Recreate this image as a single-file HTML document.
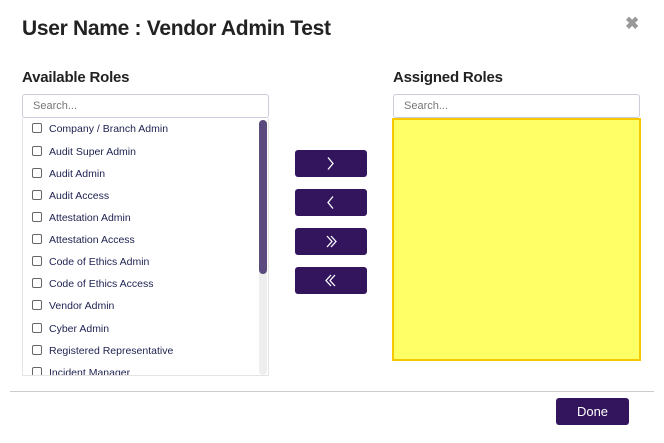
<!DOCTYPE html><html><head><style>
body{margin:0;width:664px;height:443px;background:#fff;font-family:"Liberation Sans",sans-serif;position:relative;overflow:hidden}
.a{position:absolute}
.t{left:22px;top:17px;font-size:21px;color:#222;font-weight:bold;letter-spacing:-0.3px}
.h{font-size:15px;color:#222;top:69px;font-weight:bold;letter-spacing:-0.2px}
.s{border:1px solid #ccd;border-radius:3px;font-size:11px;color:#777;line-height:22px;padding-left:10px;box-sizing:border-box;height:24px;width:247px}
.list{left:22px;top:118px;width:247px;height:258px;border:1px solid #e4e4e4;border-top:0;box-sizing:border-box;overflow:hidden}
.it{position:absolute;left:9px;font-size:10.5px;color:#1d2150;white-space:nowrap}
.it i{display:inline-block;width:8px;height:8px;border:1px solid #666;border-radius:2px;vertical-align:-1px;margin-right:7px}
.sb{left:259px;top:120px;width:8px;height:255px;background:#eee;border-radius:4px}
.th{left:259px;top:120px;width:8px;height:154px;background:#5b4a7e;border-radius:4px}
.b{left:295px;width:72px;height:27px;background:#33155e;border-radius:3px}
.b svg{position:absolute;left:0;top:0}
</style></head><body>
<div class="a t">User Name : Vendor Admin Test</div>
<div class="a" style="left:625px;top:14px;font-size:17px;color:#999;font-weight:bold">✖</div>
<div class="a h" style="left:22px">Available Roles</div>
<div class="a h" style="left:393px">Assigned Roles</div>
<div class="a s" style="left:22px;top:94px">Search...</div>
<div class="a s" style="left:393px;top:94px">Search...</div>
<div class="a list">
<div class="it" style="top:5px"><i></i>Company / Branch Admin</div>
<div class="it" style="top:28px"><i></i>Audit Super Admin</div>
<div class="it" style="top:50px"><i></i>Audit Admin</div>
<div class="it" style="top:72px"><i></i>Audit Access</div>
<div class="it" style="top:94px"><i></i>Attestation Admin</div>
<div class="it" style="top:116px"><i></i>Attestation Access</div>
<div class="it" style="top:138px"><i></i>Code of Ethics Admin</div>
<div class="it" style="top:160px"><i></i>Code of Ethics Access</div>
<div class="it" style="top:182px"><i></i>Vendor Admin</div>
<div class="it" style="top:205px"><i></i>Cyber Admin</div>
<div class="it" style="top:227px"><i></i>Registered Representative</div>
<div class="it" style="top:249px"><i></i>Incident Manager</div>
</div>
<div class="a sb"></div><div class="a th"></div>
<div class="a b" style="top:150px"><svg width="72" height="27"><path d="M33,7.5 l5,6 l-5,6" fill="none" stroke="#fff" stroke-width="1.3"/></svg></div>
<div class="a b" style="top:189px"><svg width="72" height="27"><path d="M38,7.5 l-5,6 l5,6" fill="none" stroke="#fff" stroke-width="1.3"/></svg></div>
<div class="a b" style="top:228px"><svg width="72" height="27"><path d="M32,8 l5,5.5 l-5,5.5 M36,8 l5,5.5 l-5,5.5" fill="none" stroke="#fff" stroke-width="1.3"/></svg></div>
<div class="a b" style="top:267px"><svg width="72" height="27"><path d="M36,8 l-5,5.5 l5,5.5 M40,8 l-5,5.5 l5,5.5" fill="none" stroke="#fff" stroke-width="1.3"/></svg></div>
<div class="a" style="left:392px;top:118px;width:249px;height:243px;background:#ffff66;border:2px solid #f5c800;box-sizing:border-box"></div>
<div class="a" style="left:10px;top:391px;width:644px;height:1px;background:#ccc"></div>
<div class="a" style="left:556px;top:398px;width:73px;height:27px;background:#33155e;border-radius:3px;color:#fff;font-size:13px;text-align:center;line-height:27px">Done</div>
</body></html>
